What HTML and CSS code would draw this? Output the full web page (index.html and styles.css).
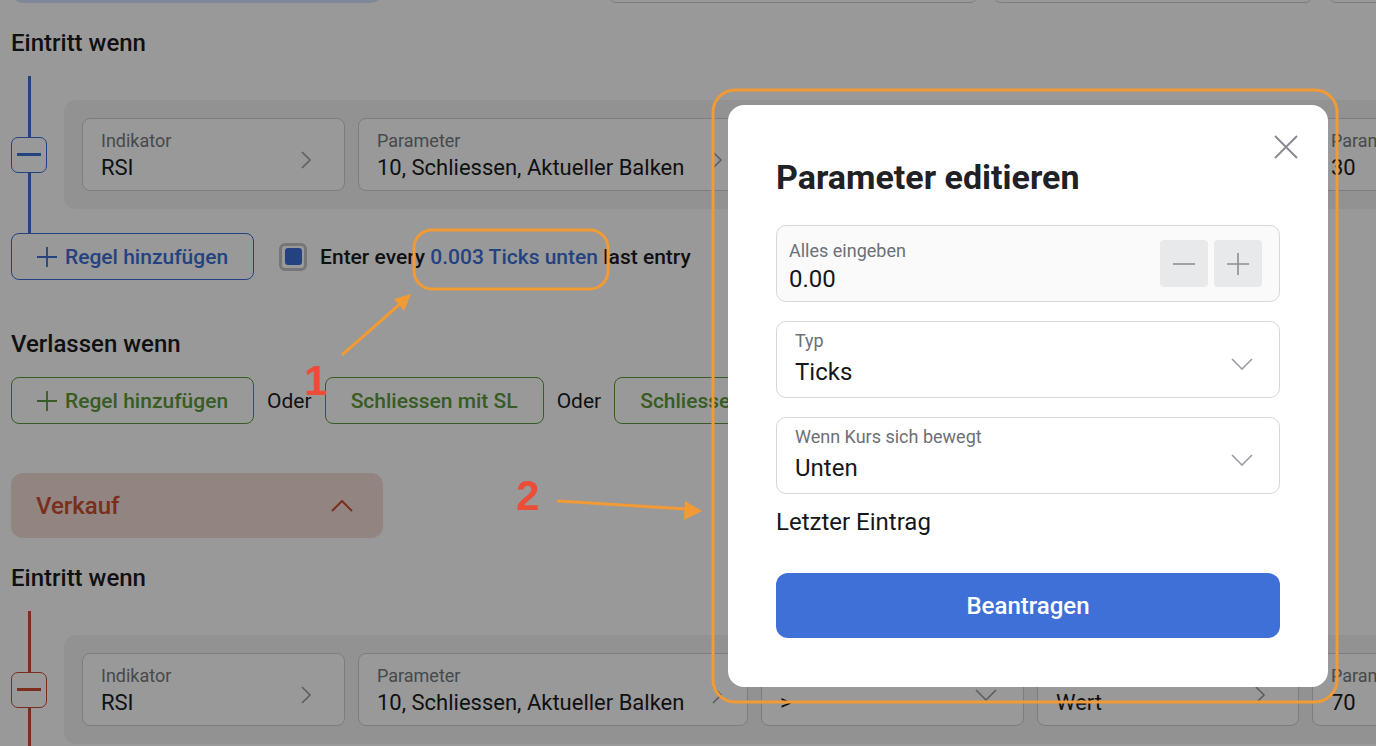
FILE: index.html
```html
<!DOCTYPE html>
<html lang="de">
<head>
    <meta charset="UTF-8">
    <meta name="viewport" content="width=device-width, initial-scale=1.0">
    <title>Parameter editieren</title>
    <link rel="stylesheet" href="styles.css">
</head>
<body>
    <div class="page">
        <div class="top-strip">
            <div class="side-head buy"></div>
            <div class="stub stub-a"></div>
            <div class="stub stub-b"></div>
            <div class="stub stub-c"></div>
        </div>

        <h2 class="section-title">Eintritt wenn</h2>
        <div class="rule-group buy">
            <div class="rail">
                <span class="rail-line"></span>
                <button class="rail-btn"><span class="dash"></span></button>
                <span class="rail-line"></span>
            </div>
            <div class="rule-card">
                <div class="field w-ind">
                    <div class="field-text"><span class="label">Indikator</span><span class="value">RSI</span></div>
                    <svg class="chev-r" width="12" height="20" viewBox="0 0 12 20"><path d="M2 2l8 8-8 8"/></svg>
                </div>
                <div class="field w-par">
                    <div class="field-text"><span class="label">Parameter</span><span class="value">10, Schliessen, Aktueller Balken</span></div>
                    <svg class="chev-r" width="12" height="20" viewBox="0 0 12 20"><path d="M2 2l8 8-8 8"/></svg>
                </div>
                <div class="field w-op">
                    <div class="field-text"><span class="label">Bedingung</span><span class="value">&gt;</span></div>
                    <svg class="chev-d" width="22" height="12" viewBox="0 0 22 12"><path d="M1 1l10 10 10-10"/></svg>
                </div>
                <div class="field w-val">
                    <div class="field-text"><span class="label">Vergleichen mit</span><span class="value">Wert</span></div>
                    <svg class="chev-r" width="12" height="20" viewBox="0 0 12 20"><path d="M2 2l8 8-8 8"/></svg>
                </div>
                <div class="field w-val">
                    <div class="field-text"><span class="label">Parameter</span><span class="value">30</span></div>
                </div>
            </div>
        </div>

        <div class="action-row">
            <button class="add-btn blue">
                <svg width="20" height="20" viewBox="0 0 20 20"><path d="M10 0v20M0 10h20"/></svg>
                Regel hinzufügen
            </button>
            <label class="check">
                <span class="check-box"><span class="check-fill"></span></span>
                <span>Enter every <a class="link">0.003 Ticks unten</a> last entry</span>
            </label>
        </div>

        <h2 class="section-title exit-title">Verlassen wenn</h2>
        <div class="action-row">
            <button class="add-btn green">
                <svg width="20" height="20" viewBox="0 0 20 20"><path d="M10 0v20M0 10h20"/></svg>
                Regel hinzufügen
            </button>
            <span class="or">Oder</span>
            <button class="add-btn green">Schliessen mit SL</button>
            <span class="or">Oder</span>
            <button class="add-btn green">Schliessen mit TP</button>
        </div>

        <div class="side-head sell">
            <span>Verkauf</span>
            <svg width="22" height="12" viewBox="0 0 22 12"><path d="M1 11l10-10 10 10"/></svg>
        </div>

        <h2 class="section-title sell-title">Eintritt wenn</h2>
        <div class="rule-group sell">
            <div class="rail">
                <span class="rail-line"></span>
                <button class="rail-btn"><span class="dash"></span></button>
                <span class="rail-line"></span>
            </div>
            <div class="rule-card">
                <div class="field w-ind">
                    <div class="field-text"><span class="label">Indikator</span><span class="value">RSI</span></div>
                    <svg class="chev-r" width="12" height="20" viewBox="0 0 12 20"><path d="M2 2l8 8-8 8"/></svg>
                </div>
                <div class="field w-par">
                    <div class="field-text"><span class="label">Parameter</span><span class="value">10, Schliessen, Aktueller Balken</span></div>
                    <svg class="chev-r" width="12" height="20" viewBox="0 0 12 20"><path d="M2 2l8 8-8 8"/></svg>
                </div>
                <div class="field w-op">
                    <div class="field-text"><span class="label">Bedingung</span><span class="value">&gt;</span></div>
                    <svg class="chev-d" width="22" height="12" viewBox="0 0 22 12"><path d="M1 1l10 10 10-10"/></svg>
                </div>
                <div class="field w-val">
                    <div class="field-text"><span class="label">Vergleichen mit</span><span class="value">Wert</span></div>
                    <svg class="chev-r" width="12" height="20" viewBox="0 0 12 20"><path d="M2 2l8 8-8 8"/></svg>
                </div>
                <div class="field w-val">
                    <div class="field-text"><span class="label">Parameter</span><span class="value">70</span></div>
                </div>
            </div>
        </div>
    </div>

    <div class="backdrop"></div>

    <div class="modal">
        <button class="close">
            <svg width="24" height="24" viewBox="0 0 24 24"><path d="M1 1l22 22M23 1L1 23"/></svg>
        </button>
        <h1 class="modal-title">Parameter editieren</h1>

        <div class="m-field num">
            <div class="field-text">
                <span class="m-label">Alles eingeben</span>
                <span class="m-value">0.00</span>
            </div>
            <div class="stepper">
                <button class="step"><svg width="22" height="22" viewBox="0 0 22 22"><path d="M0 11h22"/></svg></button>
                <button class="step"><svg width="22" height="22" viewBox="0 0 22 22"><path d="M11 0v22M0 11h22"/></svg></button>
            </div>
        </div>

        <div class="m-field select">
            <div class="field-text">
                <span class="m-label">Typ</span>
                <span class="m-value">Ticks</span>
            </div>
            <svg class="chev-d" width="22" height="12" viewBox="0 0 22 12"><path d="M1 1l10 10 10-10"/></svg>
        </div>

        <div class="m-field select">
            <div class="field-text">
                <span class="m-label">Wenn Kurs sich bewegt</span>
                <span class="m-value">Unten</span>
            </div>
            <svg class="chev-d" width="22" height="12" viewBox="0 0 22 12"><path d="M1 1l10 10 10-10"/></svg>
        </div>

        <p class="m-note">Letzter Eintrag</p>

        <button class="submit">Beantragen</button>
    </div>

    <!-- annotations drawn over the screenshot -->
    <svg class="marks" width="1376" height="746" viewBox="0 0 1376 746">
        <rect x="414" y="230" width="194" height="59" rx="18"/>
        <rect x="713" y="90" width="624" height="612" rx="22"/>
        <line x1="342" y1="355" x2="400" y2="304"/>
        <polygon points="411,294 404,311 394,299"/>
        <line x1="557" y1="501" x2="686" y2="509"/>
        <polygon points="702,511 684,520 685,501"/>
        <text x="304" y="395">1</text>
        <text x="516" y="510">2</text>
    </svg>
</body>
</html>
```

FILE: styles.css
```css
body {
    margin: 0;
    font-family: Roboto, "Noto Sans", sans-serif;
    color: #1b1c1e;
    background-color: #ffffff;
    overflow: hidden;
    width: 1376px;
    height: 746px;
}
.page {
    padding-left: 11px;
}
button {
    font-family: inherit;
    cursor: pointer;
}

/* previous section, cut off at the top */
.top-strip {
    display: flex;
    margin-top: -62px;
}
.stub {
    height: 65px;
    box-sizing: border-box;
    border: 1px solid #cfd1d5;
    border-radius: 8px;
    flex-shrink: 0;
}
.stub-a {
    width: 370px;
    margin-left: 225px;
}
.stub-b {
    width: 320px;
    margin-left: 15px;
}
.stub-c {
    width: 200px;
    margin-left: 15px;
}

.side-head {
    width: 372px;
    height: 65px;
    box-sizing: border-box;
    border-radius: 12px;
    display: flex;
    align-items: center;
    justify-content: space-between;
    padding: 0 30px 0 25px;
    font-size: 24px;
    font-weight: 500;
    flex-shrink: 0;
}
.side-head.buy {
    background-color: #d4e2fd;
}
.side-head.sell {
    background-color: #f3dcd5;
    color: #cc4e2f;
    margin-top: 49px;
}
.side-head svg path {
    fill: none;
    stroke: #cc4e2f;
    stroke-width: 2;
}

.section-title {
    margin: 26px 0 19px;
    font-size: 24px;
    line-height: 28px;
    font-weight: 500;
}
.exit-title {
    margin-top: 50px;
}

/* rule rows */
.rule-group {
    display: flex;
}
.rail {
    width: 36px;
    display: flex;
    flex-direction: column;
    align-items: center;
    flex-shrink: 0;
}
.rail-line {
    flex: 1;
    width: 3px;
}
.rail-btn {
    width: 36px;
    height: 36px;
    padding: 0;
    border-radius: 7px;
    background-color: #ffffff;
    display: flex;
    align-items: center;
    justify-content: center;
}
.dash {
    width: 24px;
    height: 3px;
}
.buy .rail-line, .buy .dash {
    background-color: #3e6fd6;
}
.buy .rail-btn {
    border: 1px solid #3e6fd6;
}
.sell .rail-line, .sell .dash {
    background-color: #cc4e2f;
}
.sell .rail-btn {
    border: 1px solid #cc4e2f;
}
.rule-card {
    margin: 24px 0 24px 17px;
    padding: 18px;
    display: flex;
    gap: 13px;
    background-color: #f4f4f5;
    border-radius: 12px;
    flex-shrink: 0;
}
.field {
    height: 73px;
    box-sizing: border-box;
    padding: 11px 32px 0 18px;
    border: 1px solid #cfd1d5;
    border-radius: 8px;
    background-color: #ffffff;
    display: flex;
    align-items: center;
    justify-content: space-between;
    flex-shrink: 0;
}
.field .field-text {
    align-self: flex-start;
}
.field-text {
    display: flex;
    flex-direction: column;
    white-space: nowrap;
}
.label {
    font-size: 18px;
    line-height: 22px;
    color: #777a80;
}
.value {
    font-size: 22px;
    line-height: 26px;
    margin-top: 3px;
}
.w-ind { width: 263px; }
.w-par { width: 390px; padding-right: 24px; }
.w-op { width: 263px; padding-right: 26px; }
.w-val { width: 262px; }
.chev-r path, .chev-d path {
    fill: none;
    stroke: #9a9ca1;
    stroke-width: 1.6;
}

/* buttons under the rules */
.action-row {
    display: flex;
    align-items: center;
    gap: 13px;
    height: 47px;
}
.add-btn {
    height: 47px;
    box-sizing: border-box;
    padding: 0 25px;
    display: inline-flex;
    align-items: center;
    gap: 8px;
    border-radius: 8px;
    background-color: #ffffff;
    font-size: 21px;
    font-weight: 500;
    white-space: nowrap;
    flex-shrink: 0;
}
.add-btn svg path {
    fill: none;
    stroke-width: 1.8;
}
.add-btn.blue {
    border: 1px solid #3e6fd6;
    color: #3e6fd6;
}
.add-btn.blue svg path {
    stroke: #3e6fd6;
}
.add-btn.green {
    border: 1px solid #5e9a3c;
    color: #5e9a3c;
}
.add-btn.green svg path {
    stroke: #5e9a3c;
}
.or {
    font-size: 21px;
}
.check {
    display: flex;
    align-items: center;
    gap: 13px;
    margin-left: 12px;
    font-size: 21px;
    font-weight: 500;
    white-space: nowrap;
}
.check-box {
    width: 28px;
    height: 28px;
    box-sizing: border-box;
    border: 3px solid #c4c5c8;
    border-radius: 6px;
    display: flex;
    align-items: center;
    justify-content: center;
    background-color: #ffffff;
}
.check-fill {
    width: 17px;
    height: 17px;
    border-radius: 3px;
    background-color: #3e6fd6;
}
.link {
    color: #3e6fd6;
}

/* dialog */
.backdrop {
    position: fixed;
    inset: 0;
    background-color: rgba(0, 0, 0, 0.4);
}
.modal {
    position: absolute;
    left: 728px;
    top: 105px;
    width: 600px;
    height: 582px;
    box-sizing: border-box;
    padding: 52px 48px 0;
    background-color: #ffffff;
    border-radius: 16px;
}
.close {
    position: absolute;
    top: 30px;
    right: 30px;
    width: 24px;
    height: 24px;
    padding: 0;
    border: none;
    background: none;
}
.close path {
    stroke: #878b93;
    stroke-width: 2;
}
.modal-title {
    margin: 0 0 28px;
    font-size: 34px;
    line-height: 40px;
    font-weight: 700;
    color: #1f2125;
}
.m-field {
    height: 77px;
    box-sizing: border-box;
    border: 1px solid #d6d7db;
    border-radius: 10px;
    display: flex;
    justify-content: space-between;
    margin-bottom: 19px;
}
.m-field.num {
    background-color: #fafafa;
    padding: 14px 17px 0 12px;
}
.m-field.select {
    padding: 8px 26px 0 18px;
    align-items: center;
}
.m-field.select .field-text {
    align-self: flex-start;
}
.m-field.select .m-value {
    margin-top: 6px;
}
.m-label {
    font-size: 18px;
    line-height: 22px;
    color: #6c7077;
}
.m-value {
    font-size: 24px;
    line-height: 28px;
    margin-top: 3px;
    color: #16171a;
}
.stepper {
    display: flex;
    gap: 6px;
    height: 47px;
}
.step {
    width: 48px;
    height: 47px;
    padding: 0;
    border: none;
    border-radius: 4px;
    background-color: #e8e9eb;
    display: flex;
    align-items: center;
    justify-content: center;
}
.step path {
    stroke: #8b8f96;
    stroke-width: 1.6;
}
.m-note {
    margin: -5px 0 0;
    font-size: 24px;
    line-height: 28px;
    color: #16171a;
}
.submit {
    margin-top: 37px;
    width: 100%;
    height: 65px;
    border: none;
    border-radius: 12px;
    background-color: #3f70d8;
    color: #ffffff;
    font-size: 24px;
    font-weight: 500;
}

/* screenshot annotations */
.marks {
    position: absolute;
    left: 0;
    top: 0;
    pointer-events: none;
}
.marks rect {
    fill: none;
    stroke: #f29a34;
    stroke-width: 3;
}
.marks line {
    stroke: #f29a34;
    stroke-width: 3;
}
.marks polygon {
    fill: #f29a34;
}
.marks text {
    font-family: "Liberation Sans", Arial, sans-serif;
    font-size: 42px;
    font-weight: 700;
    fill: #ec4d37;
}
```
